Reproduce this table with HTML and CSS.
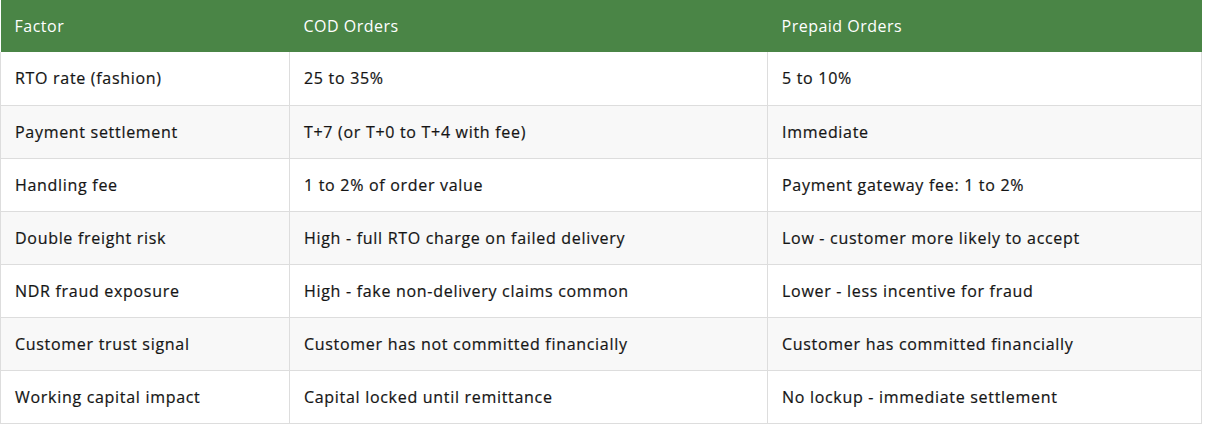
FILE: index.html
```html
<!DOCTYPE html>
<html>
<head>
<meta charset="utf-8">
<link rel="stylesheet" href="styles.css">
</head>
<body>
<table class="cmp">
  <colgroup><col class="c1"><col class="c2"><col class="c3"></colgroup>
  <thead>
    <tr><th>Factor</th><th>COD Orders</th><th>Prepaid Orders</th></tr>
  </thead>
  <tbody>
    <tr><td>RTO rate (fashion)</td><td>25 to 35%</td><td>5 to 10%</td></tr>
    <tr><td>Payment settlement</td><td>T+7 (or T+0 to T+4 with fee)</td><td>Immediate</td></tr>
    <tr><td>Handling fee</td><td>1 to 2% of order value</td><td>Payment gateway fee: 1 to 2%</td></tr>
    <tr><td>Double freight risk</td><td>High - full RTO charge on failed delivery</td><td>Low - customer more likely to accept</td></tr>
    <tr><td>NDR fraud exposure</td><td>High - fake non-delivery claims common</td><td>Lower - less incentive for fraud</td></tr>
    <tr><td>Customer trust signal</td><td>Customer has not committed financially</td><td>Customer has committed financially</td></tr>
    <tr><td>Working capital impact</td><td>Capital locked until remittance</td><td>No lockup - immediate settlement</td></tr>
  </tbody>
</table>
</body>
</html>
```
FILE: styles.css
```css
html, body {
  margin: 0;
  padding: 0;
  background: #ffffff;
}
body {
  font-family: "Open Sans", "Liberation Sans", sans-serif;
  font-size: 16px;
  font-weight: 500;
  letter-spacing: 0.7px;
  color: #151515;
}
.cmp {
  border-collapse: collapse;
  width: 1201px;
  table-layout: fixed;
}
.c1 { width: 289px; }
.c2 { width: 478px; }
.c3 { width: 434px; }
.cmp th {
  background: #4a8546;
  color: #ffffff;
  font-weight: 400;
  letter-spacing: 0.5px;
  text-align: left;
  height: 52px;
  padding: 0 14px;
  box-sizing: border-box;
  border: none;
}
.cmp td {
  height: 53px;
  padding: 0 14px;
  box-sizing: border-box;
  border: 1px solid #dddddd;
  border-top: none;
  -webkit-text-stroke: 0.2px #151515;
}
.cmp tbody tr:nth-child(even) td {
  background: #f8f8f8;
}
```
